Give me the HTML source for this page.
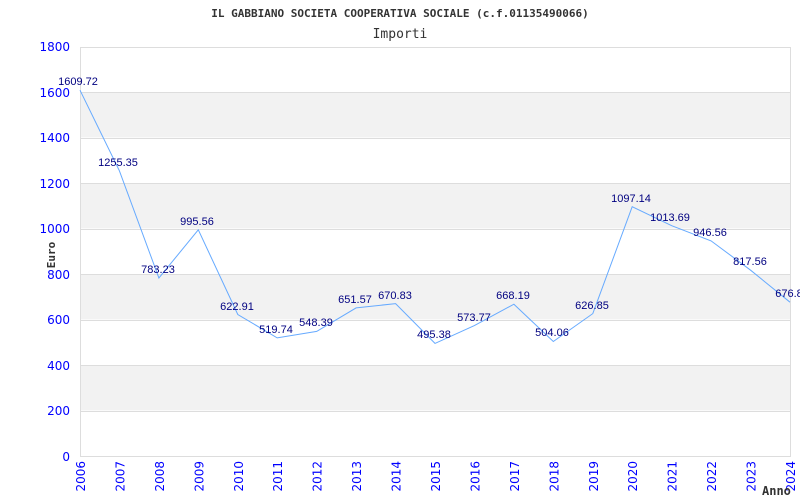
<!DOCTYPE html>
<html><head><meta charset="utf-8"><style>
html,body{margin:0;padding:0;background:#fff;width:800px;height:500px;overflow:hidden}
svg{display:block}
.y{font:12px "DejaVu Sans","Liberation Sans",sans-serif;fill:#0000ff}
.v{font:11px "Liberation Sans",sans-serif;fill:#000080}
.m{font-family:"DejaVu Sans Mono","Liberation Mono",monospace;fill:#333}
</style></head><body>
<svg width="800" height="500" xmlns="http://www.w3.org/2000/svg">
<text x="400" y="17" text-anchor="middle" class="m" font-size="11" font-weight="bold">IL GABBIANO SOCIETA COOPERATIVA SOCIALE (c.f.01135490066)</text>
<text x="400" y="38" text-anchor="middle" class="m" font-size="13">Importi</text>
<g fill="#f2f2f2">
<rect x="80" y="92" width="710" height="45.4"/>
<rect x="80" y="183" width="710" height="45.4"/>
<rect x="80" y="274" width="710" height="45.4"/>
<rect x="80" y="365" width="710" height="45.4"/>
</g>
<g stroke="#dddddd" stroke-width="1">
<line x1="80" y1="47.5" x2="790" y2="47.5"/>
<line x1="80" y1="92.5" x2="790" y2="92.5"/>
<line x1="80" y1="138.5" x2="790" y2="138.5"/>
<line x1="80" y1="183.5" x2="790" y2="183.5"/>
<line x1="80" y1="229.5" x2="790" y2="229.5"/>
<line x1="80" y1="274.5" x2="790" y2="274.5"/>
<line x1="80" y1="320.5" x2="790" y2="320.5"/>
<line x1="80" y1="365.5" x2="790" y2="365.5"/>
<line x1="80" y1="411.5" x2="790" y2="411.5"/>
<line x1="80.5" y1="47" x2="80.5" y2="457"/>
<line x1="790.5" y1="47" x2="790.5" y2="457"/>
<line x1="80" y1="456.5" x2="791" y2="456.5"/>
</g>
<g class="y" text-anchor="end">
<text x="70" y="51">1800</text><text x="70" y="97">1600</text><text x="70" y="142">1400</text>
<text x="70" y="188">1200</text><text x="70" y="233">1000</text><text x="70" y="279">800</text>
<text x="70" y="324">600</text><text x="70" y="370">400</text><text x="70" y="415">200</text>
<text x="70" y="461">0</text>
</g>
<text transform="translate(55,255) rotate(-90)" text-anchor="middle" class="m" font-size="11" font-weight="bold">Euro</text>
<g class="y" text-anchor="end" id="yrs"></g>
<polyline fill="none" stroke="#66aaff" stroke-width="1" points="80,90.2 119.4,170.8 158.9,278 198.3,229.8 237.8,314.5 277.2,337.9 316.7,331.4 356.1,307.9 395.6,303.6 435,343.4 474.4,325.6 513.9,304.2 553.3,341.5 592.8,313.6 632.2,206.7 671.7,225.7 711.1,240.9 750.6,270.2 790,302.2"/>
<g class="v" text-anchor="middle">
<text x="78" y="85">1609.72</text><text x="118" y="166">1255.35</text><text x="158" y="273">783.23</text>
<text x="197" y="225">995.56</text><text x="237" y="310">622.91</text><text x="276" y="333">519.74</text>
<text x="316" y="326">548.39</text><text x="355" y="303">651.57</text><text x="395" y="299">670.83</text>
<text x="434" y="338">495.38</text><text x="474" y="321">573.77</text><text x="513" y="299">668.19</text>
<text x="552" y="336">504.06</text><text x="592" y="309">626.85</text><text x="631" y="202">1097.14</text>
<text x="670" y="221">1013.69</text><text x="710" y="236">946.56</text><text x="750" y="265">817.56</text>
<text x="789" y="297">676.8</text>
</g>
<g class="y" text-anchor="end">
<text transform="translate(85,461) rotate(-90)">2006</text>
<text transform="translate(124.4,461) rotate(-90)">2007</text>
<text transform="translate(163.9,461) rotate(-90)">2008</text>
<text transform="translate(203.3,461) rotate(-90)">2009</text>
<text transform="translate(242.8,461) rotate(-90)">2010</text>
<text transform="translate(282.2,461) rotate(-90)">2011</text>
<text transform="translate(321.7,461) rotate(-90)">2012</text>
<text transform="translate(361.1,461) rotate(-90)">2013</text>
<text transform="translate(400.6,461) rotate(-90)">2014</text>
<text transform="translate(440,461) rotate(-90)">2015</text>
<text transform="translate(479.4,461) rotate(-90)">2016</text>
<text transform="translate(518.9,461) rotate(-90)">2017</text>
<text transform="translate(558.3,461) rotate(-90)">2018</text>
<text transform="translate(597.8,461) rotate(-90)">2019</text>
<text transform="translate(637.2,461) rotate(-90)">2020</text>
<text transform="translate(676.7,461) rotate(-90)">2021</text>
<text transform="translate(716.1,461) rotate(-90)">2022</text>
<text transform="translate(755.6,461) rotate(-90)">2023</text>
<text transform="translate(795,461) rotate(-90)">2024</text>
</g>
<text x="762" y="495" class="m" font-size="12" font-weight="bold">Anno</text>
</svg>
</body></html>
